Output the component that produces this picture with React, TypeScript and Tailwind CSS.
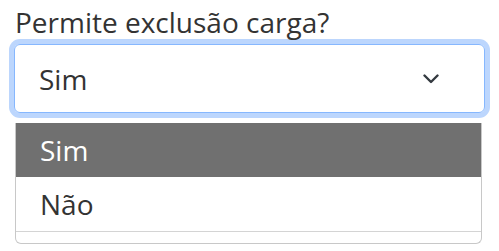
import React from "react";

export default function App() {
  return (
    <div className="w-[499px] h-[251px] bg-white relative overflow-hidden" style={{ fontFamily: '"Open Sans", "Noto Sans", sans-serif' }}>
      <div className="pl-[15px] pt-[3px] text-[28px] leading-[38px] text-[#333333]">Permite exclusão carga?</div>
      <div className="ml-[14px] mt-[3px] w-[471px] h-[69px] rounded-[6px] border border-[#86b7fe] shadow-[0_0_0_5px_#bcd6fd] flex items-center justify-between pl-[24px] pr-[45px] text-[28px] text-[#333333]">
        <span>Sim</span>
        <svg width="16" height="10" viewBox="0 0 16 10" fill="none">
          <path d="M1.5 1.5l6.5 6.5 6.5-6.5" stroke="#343a40" strokeWidth="2.4" strokeLinecap="round" strokeLinejoin="round" />
        </svg>
      </div>
      <div className="ml-[15px] mt-[10px] w-[467px] border-x border-b border-[#c8c8c8] rounded-b-[6px] text-[28px]">
        <div className="h-[54px] bg-[#707070] text-white flex items-center pl-[24px]">Sim</div>
        <div className="h-[55px] bg-white text-[#333333] flex items-center pl-[24px] border-b border-[#d4d4d4]">Não</div>
        <div className="h-[11px]" />
      </div>
    </div>
  );
}
